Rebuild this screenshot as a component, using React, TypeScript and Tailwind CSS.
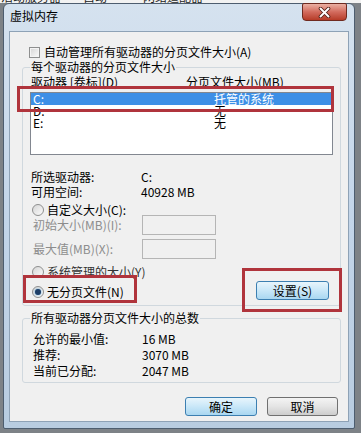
import type { ReactNode } from 'react'

const FONT = "font-['Noto_Sans_CJK_SC','Liberation_Sans',sans-serif]"

function Checkbox() {
  return (
    <span className="w-[11px] h-[11px] border border-[#8e8f8f] bg-[#f4f4f4] flex items-center justify-center">
      <span className="w-[7px] h-[7px] bg-gradient-to-br from-[#d9d9d9] to-[#f7f7f7]" />
    </span>
  )
}

function Radio({ checked = false }: { checked?: boolean }) {
  return (
    <span className="w-[12px] h-[12px] rounded-full border border-[#8e8f8f] bg-gradient-to-br from-[#d6d6d6] to-[#fbfbfb] flex items-center justify-center">
      {checked && <span className="w-[6px] h-[6px] rounded-full bg-[#1d3d66] shadow-[0_0_2px_#4aa3e0]" />}
    </span>
  )
}

function Button({ children, width, primary }: { children: ReactNode; width: string; primary?: boolean }) {
  return (
    <div
      className={`${width} h-[19px] rounded-[3px] border flex items-center justify-center leading-[14px] ${
        primary
          ? 'border-[#3c7fb1] bg-gradient-to-b from-[#e8f5fc] via-[#c9e7f8] to-[#a9d7f1]'
          : 'border-[#707070] bg-gradient-to-b from-[#f4f4f4] via-[#e4e4e4] to-[#cdcdcd]'
      }`}
    >
      {children}
    </div>
  )
}

function Row({ label, value, labelW, h }: { label: string; value: string; labelW: string; h: string }) {
  return (
    <div className={`${h} flex items-center`}>
      <span className={labelW}>{label}</span>
      <span>{value}</span>
    </div>
  )
}

export default function App() {
  return (
    <div className={`relative w-[361px] h-[433px] overflow-hidden bg-[#7d8287] flex flex-col ${FONT} text-[12px] text-black`}>
      {/* bottom of the window behind */}
      <div className="h-[3px] bg-[#f2f2f2] overflow-hidden flex gap-[22px] leading-[12px] text-[#222]">
        <span className="-mt-[9px] ml-[1px]">活动服务器</span>
        <span className="-mt-[9px]">自动</span>
        <span className="-mt-[9px] ml-[14px]">网络适配器</span>
      </div>

      <div className="flex">
        <div className="ml-[3px] w-[352px] h-[426px] rounded-t-[6px] rounded-b-[2px] border border-[#4d5d6f] bg-gradient-to-b from-[#d5e2ef] via-[#c3d5e9] to-[#b8cce0] flex flex-col">
          <div className="h-[27px] flex justify-between">
            <span className="pl-[6px] pt-[5px] leading-[14px] h-[14px]">虚拟内存</span>
            <div className="-mt-px mr-[7px] w-[45px] h-[18px] rounded-b-[4px] rounded-t-[2px] border border-[#6f2a20] bg-gradient-to-b from-[#eab0a3] via-[#d26a5d] to-[#b63b27] flex items-center justify-center">
              <svg width="13" height="11" viewBox="0 0 13 11">
                <path d="M2.5 1.5 L10.5 9.5 M10.5 1.5 L2.5 9.5" stroke="#4a1a12" strokeWidth="3.6" strokeLinecap="round" />
                <path d="M2.5 1.5 L10.5 9.5 M10.5 1.5 L2.5 9.5" stroke="#ffffff" strokeWidth="2" strokeLinecap="round" />
              </svg>
            </div>
          </div>

          <div className="mx-[5px] h-[391px] border border-[#8ea2b6] bg-[#f0f0f0] flex flex-col">
            <div className="mt-[13px] pl-[19px] h-[14px] flex items-center gap-[4px]">
              <Checkbox />
              <span>自动管理所有驱动器的分页文件大小(A)</span>
            </div>

            <fieldset className="mt-[1px] ml-[12px] w-[319px] border border-[#d0d8de] rounded-[3px] px-[7px] pb-[5px]">
              <legend className="px-px leading-[14px] h-[14px]">每个驱动器的分页文件大小</legend>
              <div className="mt-[1px] h-[14px] flex items-center pl-px">
                <span className="w-[155px]">驱动器 [卷标](D)</span>
                <span>分页文件大小(MB)</span>
              </div>
              <div className="mt-[3px] h-[63px] border border-[#828790] bg-white flex flex-col">
                {[
                  ['C:', '托管的系统', true],
                  ['D:', '无', false],
                  ['E:', '无', false],
                ].map(([drive, size, selected]) => (
                  <div
                    key={drive as string}
                    className={`h-[12px] leading-[12px] flex ${selected ? 'bg-[#3d8fe6] text-white' : ''}`}
                  >
                    <span className="pl-[2px] w-[183px]">{drive}</span>
                    <span>{size}</span>
                  </div>
                ))}
              </div>

              <div className="mt-[14px] pl-px">
                <Row h="h-[15px]" labelW="w-[110px]" label="所选驱动器:" value="C:" />
                <Row h="h-[15px]" labelW="w-[110px]" label="可用空间:" value="40928 MB" />
              </div>

              <div className="mt-[5px] h-[12px] flex items-center gap-[3px] pl-[2px]">
                <Radio />
                <span>自定义大小(C):</span>
              </div>
              <div className="-mt-px h-[20px] flex items-center">
                <span className="w-[112px] pl-[3px] text-[#8d8d8d]">初始大小(MB)(I):</span>
                <div className="w-[74px] h-[20px] border border-[#b5b5b5] bg-[#f0f0f0]" />
              </div>
              <div className="mt-[4px] h-[20px] flex items-center">
                <span className="w-[112px] pl-[3px] text-[#8d8d8d]">最大值(MB)(X):</span>
                <div className="w-[74px] h-[20px] border border-[#b5b5b5] bg-[#f0f0f0]" />
              </div>

              <div className="mt-[7px] h-[12px] flex items-center gap-[3px] pl-[2px]">
                <Radio />
                <span className="text-[#333]">系统管理的大小(Y)</span>
              </div>
              <div className="mt-[3px] h-[19px] flex items-center justify-between">
                <div className="flex items-center gap-[3px] pl-[2px] pt-[3px]">
                  <Radio checked />
                  <span>无分页文件(N)</span>
                </div>
                <div className="mr-[4px]">
                  <Button width="w-[73px]" primary>
                    设置(S)
                  </Button>
                </div>
              </div>
            </fieldset>

            <fieldset className="mt-[5px] ml-[12px] w-[319px] border border-[#d0d8de] rounded-[3px] px-[7px] pb-[3px]">
              <legend className="px-px leading-[14px] h-[14px]">所有驱动器分页文件大小的总数</legend>
              <div className="mt-[6px] pl-[3px]">
                <Row h="h-[16px]" labelW="w-[109px]" label="允许的最小值:" value="16 MB" />
                <Row h="h-[16px]" labelW="w-[109px]" label="推荐:" value="3070 MB" />
                <Row h="h-[16px]" labelW="w-[109px]" label="当前已分配:" value="2047 MB" />
              </div>
            </fieldset>

            <div className="mt-[14px] flex justify-end gap-[10px] pr-[10px]">
              <Button width="w-[72px]" primary>
                确定
              </Button>
              <Button width="w-[71px]">取消</Button>
            </div>
          </div>
        </div>
      </div>

      {/* red annotation boxes */}
      <div className="absolute left-[17px] top-[86px] w-[317px] h-[26px] border-[3px] border-[#b0343c] pointer-events-none" />
      <div className="absolute left-[23px] top-[275px] w-[114px] h-[28px] border-[3px] border-[#b0343c] pointer-events-none" />
      <div className="absolute left-[242px] top-[268px] w-[100px] h-[44px] border-[3px] border-[#b0343c] pointer-events-none" />
    </div>
  )
}
